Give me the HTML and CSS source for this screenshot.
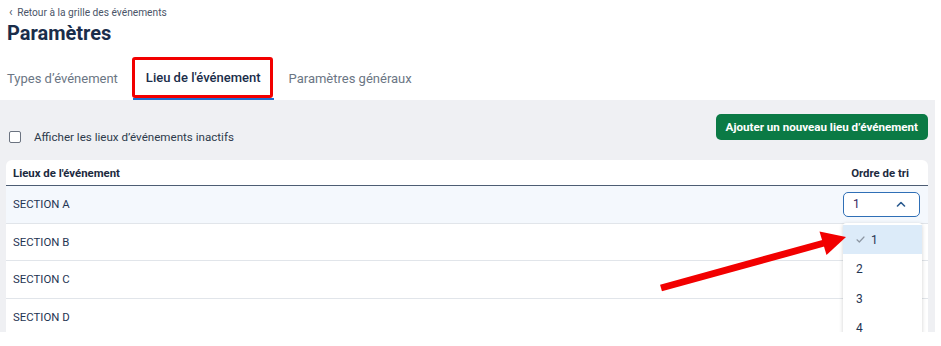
FILE: index.html
```html
<!DOCTYPE html>
<html lang="fr">
<head>
    <meta charset="UTF-8">
    <title>Paramètres</title>
    <link rel="stylesheet" href="styles.css">
</head>
<body>

<div class="page">

    <div class="top">
        <a href="#" class="back-link"><span class="chev">&lsaquo;</span> Retour à la grille des événements</a>
        <h1>Paramètres</h1>

        <ul class="tabs">
            <li><a href="#">Types d’événement</a></li>
            <li class="active"><a href="#">Lieu de l'événement</a></li>
            <li><a href="#">Paramètres généraux</a></li>
        </ul>
    </div>

    <div class="content">
        <div class="toolbar">
            <label class="check">
                <span class="box"></span>
                Afficher les lieux d’événements inactifs
            </label>
            <button type="button" class="btn-add">Ajouter un nouveau lieu d’événement</button>
        </div>

        <div class="card">
            <div class="row head">
                <span>Lieux de l'événement</span>
                <span class="col-order">Ordre de tri</span>
            </div>
            <div class="row selected">
                <span>SECTION A</span>
                <div class="select">
                    <span class="value">1</span>
                    <svg width="10" height="6" viewBox="0 0 10 6"><path d="M1.5 5 L5 1.5 L8.5 5" fill="none" stroke="#2a5a8f" stroke-width="1.6" stroke-linecap="round" stroke-linejoin="round"/></svg>

                    <ul class="dropdown">
                        <li class="current">
                            <svg class="tick" width="9" height="7" viewBox="0 0 9 7"><path d="M1 3.8 L3.3 6 L8 1" fill="none" stroke="#8c96a2" stroke-width="1.2" stroke-linecap="round" stroke-linejoin="round"/></svg>
                            1
                        </li>
                        <li>2</li>
                        <li>3</li>
                        <li>4</li>
                    </ul>
                </div>
            </div>
            <div class="row"><span>SECTION B</span></div>
            <div class="row"><span>SECTION C</span></div>
            <div class="row"><span>SECTION D</span></div>
        </div>
    </div>

    <!-- annotation arrow -->
    <svg class="arrow" width="941" height="346" viewBox="0 0 941 346">
        <line x1="661" y1="288" x2="826" y2="242.5" stroke="#f20000" stroke-width="7"/>
        <polygon points="846,237 819.5,231.5 826.5,255" fill="#f20000"/>
    </svg>
</div>

</body>
</html>
```

FILE: styles.css
```css
* {
    margin: 0;
    padding: 0;
    box-sizing: border-box;
}

body {
    font-family: Roboto, "Liberation Sans", Arial, sans-serif;
    background: #fff;
    color: #1f3553;
}

.page {
    position: relative;
    width: 935px;
    height: 332px;
    overflow: hidden;
}

.top {
    padding: 6px 0 0 7px;
    background: #fff;
}

.back-link {
    display: block;
    font-size: 10.2px;
    line-height: 12px;
    color: #4a5568;
    text-decoration: none;
    padding-left: 2px;
}

.back-link .chev {
    font-size: 12px;
    margin-right: 2px;
}

h1 {
    font-size: 20px;
    font-weight: 700;
    color: #1a2d4a;
    line-height: 26px;
    margin-top: 1px;
}

.tabs {
    list-style: none;
    display: flex;
    margin-top: 11px;
    height: 43px;
}

.tabs li {
    position: relative;
    display: flex;
    align-items: center;
    padding: 0 13px;
}

.tabs li:first-child {
    padding-left: 0;
    padding-right: 15px;
}

.tabs li a {
    font-size: 13px;
    color: #6b7684;
    text-decoration: none;
}

.tabs li:last-child {
    padding-left: 15px;
}

.tabs li.active {
    border-bottom: 2px solid #1e6fd0;
}

.tabs li.active a {
    color: #1a2d4a;
    font-weight: 500;
}

/* red highlight box round the active tab */
.tabs li.active::after {
    content: "";
    position: absolute;
    left: -1px;
    right: 1px;
    top: 0;
    bottom: 0;
    border: 3px solid #f20000;
    border-radius: 3px;
}

.content {
    background: #eff0f3;
    height: 232px;
    padding: 14px 7px 0 6px;
}

.toolbar {
    display: flex;
    justify-content: space-between;
    align-items: flex-start;
}

.check {
    display: flex;
    align-items: center;
    gap: 13px;
    margin-top: 16px;
    margin-left: 3px;
    font-size: 11.6px;
    color: #2d3a4b;
}

.check .box {
    width: 12px;
    height: 12px;
    border: 1.5px solid #6b7380;
    border-radius: 2px;
    background: #fff;
}

.btn-add {
    height: 26px;
    padding: 0 10px;
    border: none;
    border-radius: 5px;
    background: #0b7a45;
    color: #fff;
    font-family: inherit;
    font-size: 11.6px;
    font-weight: 700;
    cursor: pointer;
}

.card {
    margin-top: 16px;
    background: #fff;
    border-radius: 6px 6px 0 0;
}

.row {
    display: flex;
    justify-content: space-between;
    align-items: center;
    height: 37.5px;
    padding: 0 8px 0 7px;
    border-bottom: 1px solid #e1e5ea;
    font-size: 11.4px;
    color: #1f3553;
}

.row.head {
    height: 26px;
    font-weight: 700;
    color: #1c2a3e;
    border-bottom: 1px solid #4d5d73;
}

.row.head .col-order {
    padding-right: 11px;
}

.row.selected {
    background: #f4f8fd;
}

.select {
    position: relative;
    width: 77px;
    height: 25px;
    border: 1px solid #2f6fb6;
    border-radius: 5px;
    background: #fff;
    display: flex;
    align-items: center;
    justify-content: space-between;
    padding: 0 13px 0 9px;
    font-size: 12px;
    color: #35275f;
}

.dropdown {
    list-style: none;
    position: absolute;
    top: 30px;
    left: -1px;
    width: 79px;
    padding-top: 2px;
    background: #fff;
    box-shadow: 0 1px 4px rgba(0, 0, 0, 0.18);
    border-radius: 3px;
}

.dropdown li {
    height: 29.5px;
    display: flex;
    align-items: center;
    padding-left: 13px;
    font-size: 12px;
    color: #1f3553;
}

.dropdown li.current {
    background: #dcebf9;
}

.dropdown .tick {
    margin-right: 6px;
}

.arrow {
    position: absolute;
    left: 0;
    top: 0;
    pointer-events: none;
}
```
